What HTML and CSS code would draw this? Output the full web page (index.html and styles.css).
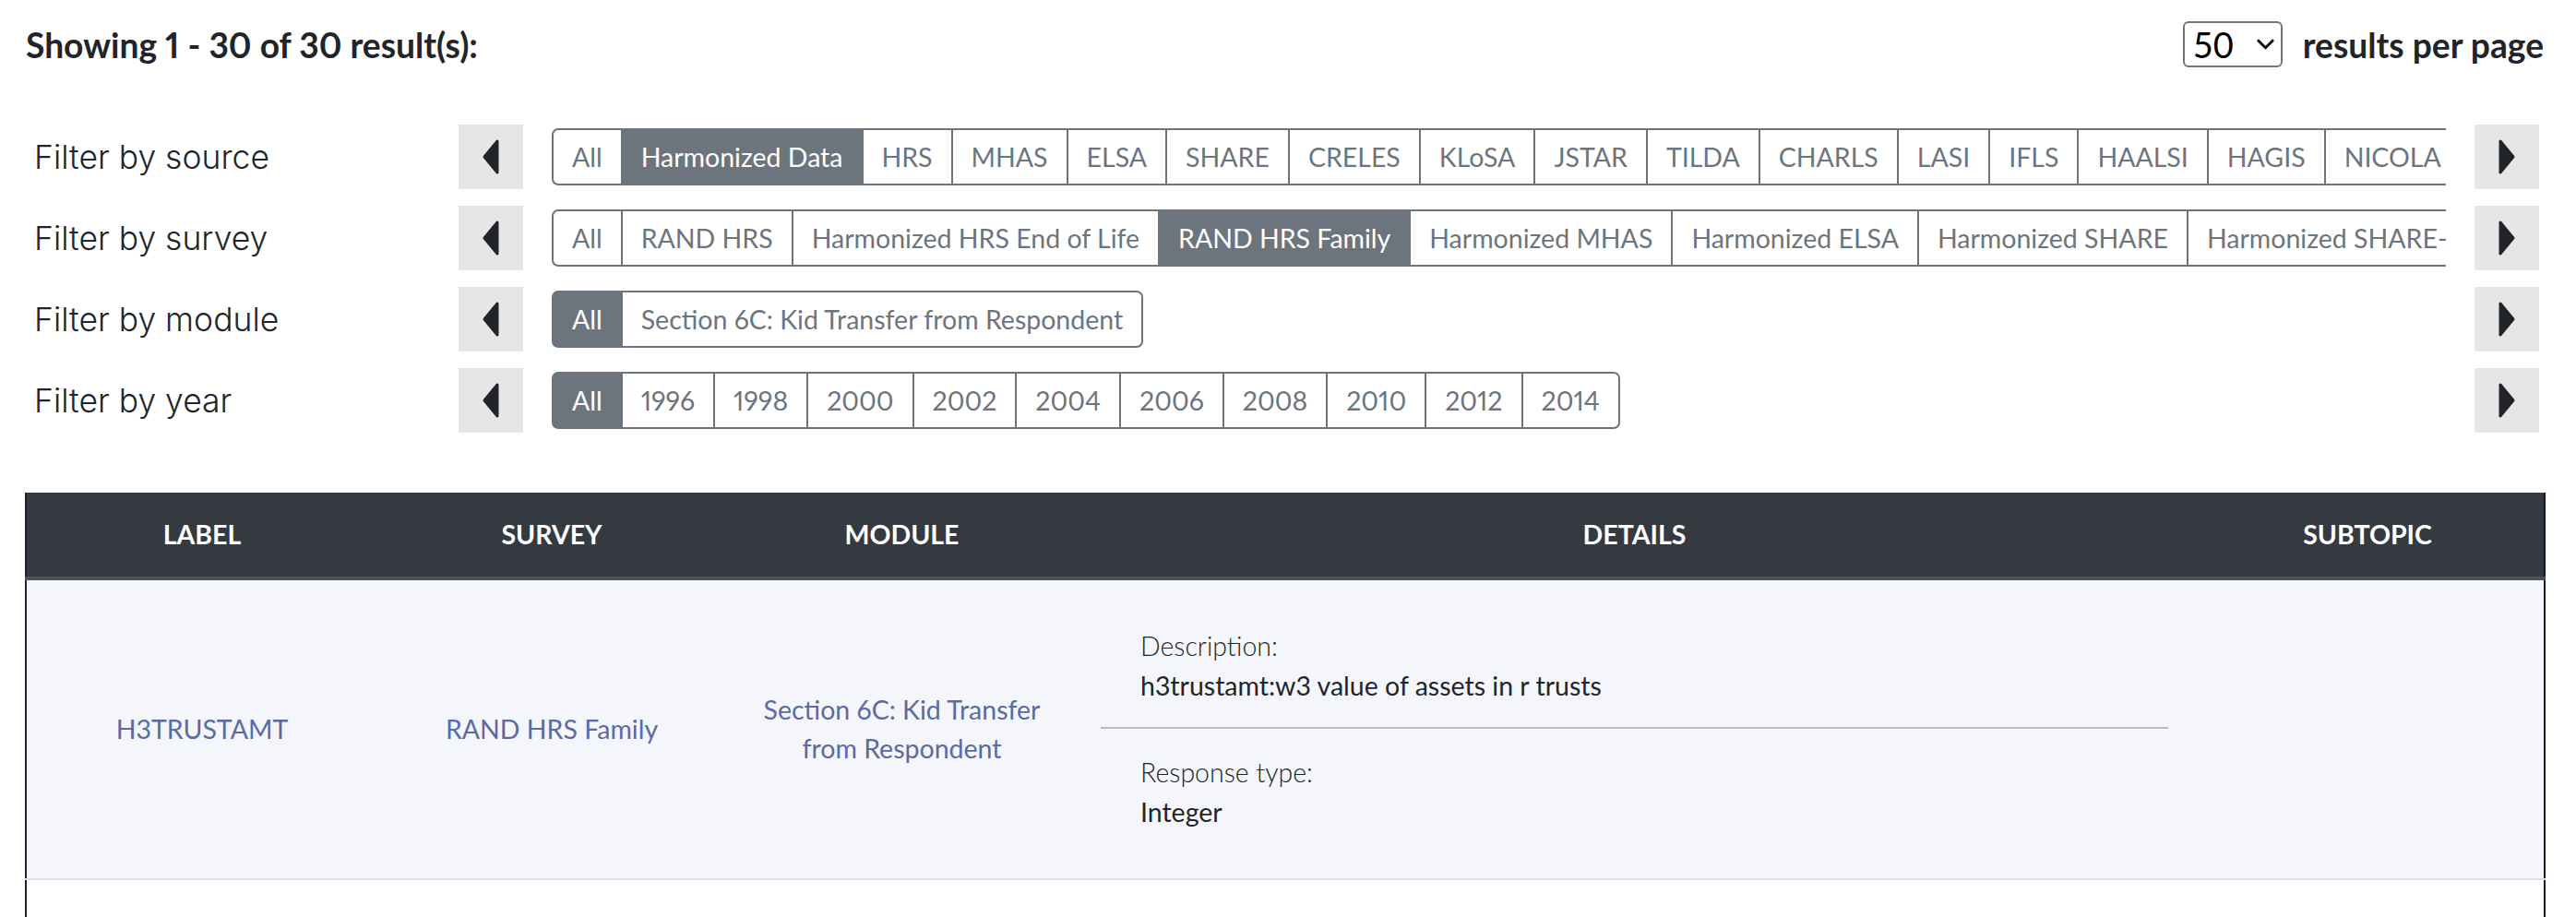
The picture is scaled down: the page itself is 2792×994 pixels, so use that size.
FILE: index.html
```html
<!DOCTYPE HTML>
<html>
<head>
    <title>Search results</title>
    <link rel="stylesheet" href="styles.css">
</head>
<body>
    <div class="results-bar">
        <h5 class="results-count">Showing 1 - 30 of 30 result(s):</h5>
        <div class="per-page">
            <div class="select-wrap">
                <select>
                    <option>10</option>
                    <option>25</option>
                    <option selected>50</option>
                    <option>100</option>
                </select>
                <svg class="select-caret" viewBox="0 0 20 12"><path d="M2 2l8 8 8-8" fill="none" stroke="#111" stroke-width="3.2" stroke-linecap="round" stroke-linejoin="round"/></svg>
            </div>
            <span>results per page</span>
        </div>
    </div>

    <div class="filters">
        <div class="filter-row">
            <div class="filter-label">Filter by source</div>
            <button class="scroll-btn"><svg viewBox="0 0 24 44"><path d="M19 5L5 22l14 17z"/></svg></button>
            <div class="filter-scroller">
                <div class="btn-group">
                    <button>All</button>
                    <button class="active">Harmonized Data</button>
                    <button>HRS</button>
                    <button>MHAS</button>
                    <button>ELSA</button>
                    <button>SHARE</button>
                    <button>CRELES</button>
                    <button>KLoSA</button>
                    <button>JSTAR</button>
                    <button>TILDA</button>
                    <button>CHARLS</button>
                    <button>LASI</button>
                    <button>IFLS</button>
                    <button>HAALSI</button>
                    <button>HAGIS</button>
                    <button>NICOLA</button>
                    <button>MARS</button>
                </div>
            </div>
            <button class="scroll-btn"><svg viewBox="0 0 24 44"><path d="M5 5l14 17L5 39z"/></svg></button>
        </div>
        <div class="filter-row">
            <div class="filter-label">Filter by survey</div>
            <button class="scroll-btn"><svg viewBox="0 0 24 44"><path d="M19 5L5 22l14 17z"/></svg></button>
            <div class="filter-scroller">
                <div class="btn-group">
                    <button>All</button>
                    <button>RAND HRS</button>
                    <button>Harmonized HRS End of Life</button>
                    <button class="active">RAND HRS Family</button>
                    <button>Harmonized MHAS</button>
                    <button>Harmonized ELSA</button>
                    <button>Harmonized SHARE</button>
                    <button>Harmonized SHARE-Israel</button>
                </div>
            </div>
            <button class="scroll-btn"><svg viewBox="0 0 24 44"><path d="M5 5l14 17L5 39z"/></svg></button>
        </div>
        <div class="filter-row">
            <div class="filter-label">Filter by module</div>
            <button class="scroll-btn"><svg viewBox="0 0 24 44"><path d="M19 5L5 22l14 17z"/></svg></button>
            <div class="filter-scroller">
                <div class="btn-group">
                    <button class="active">All</button>
                    <button>Section 6C: Kid Transfer from Respondent</button>
                </div>
            </div>
            <button class="scroll-btn"><svg viewBox="0 0 24 44"><path d="M5 5l14 17L5 39z"/></svg></button>
        </div>
        <div class="filter-row">
            <div class="filter-label">Filter by year</div>
            <button class="scroll-btn"><svg viewBox="0 0 24 44"><path d="M19 5L5 22l14 17z"/></svg></button>
            <div class="filter-scroller">
                <div class="btn-group">
                    <button class="active">All</button>
                    <button>1996</button>
                    <button>1998</button>
                    <button>2000</button>
                    <button>2002</button>
                    <button>2004</button>
                    <button>2006</button>
                    <button>2008</button>
                    <button>2010</button>
                    <button>2012</button>
                    <button>2014</button>
                </div>
            </div>
            <button class="scroll-btn"><svg viewBox="0 0 24 44"><path d="M5 5l14 17L5 39z"/></svg></button>
        </div>
    </div>

    <table class="results">
        <thead>
            <tr>
                <th class="col-label">Label</th>
                <th class="col-survey">Survey</th>
                <th class="col-module">Module</th>
                <th class="col-details">Details</th>
                <th class="col-subtopic">Subtopic</th>
            </tr>
        </thead>
        <tbody>
            <tr class="striped">
                <td><a href="#">H3TRUSTAMT</a></td>
                <td><a href="#">RAND HRS Family</a></td>
                <td><a href="#">Section 6C: Kid Transfer from Respondent</a></td>
                <td class="details">
                    <div class="detail-item">
                        <div class="detail-name">Description:</div>
                        <div class="detail-value">h3trustamt:w3 value of assets in r trusts</div>
                    </div>
                    <hr>
                    <div class="detail-item">
                        <div class="detail-name">Response type:</div>
                        <div class="detail-value">Integer</div>
                    </div>
                </td>
                <td></td>
            </tr>
            <tr>
                <td><a href="#">H4TRUSTAMT</a></td>
                <td><a href="#">RAND HRS Family</a></td>
                <td><a href="#">Section 6C: Kid Transfer from Respondent</a></td>
                <td class="details">
                    <div class="detail-item">
                        <div class="detail-name">Description:</div>
                        <div class="detail-value">h4trustamt:w4 value of assets in r trusts</div>
                    </div>
                    <hr>
                    <div class="detail-item">
                        <div class="detail-name">Response type:</div>
                        <div class="detail-value">Integer</div>
                    </div>
                </td>
                <td></td>
            </tr>
        </tbody>
    </table>
</body>
</html>
```

FILE: styles.css
```css
html, body{
    margin: 0px;
    overflow: hidden;
}
body{
    font-family: Lato, "Liberation Sans", sans-serif;
    font-variant-numeric: proportional-nums;
    color: #212529;
    background-color: #fff;
}

/* top bar */
.results-bar{
    display: flex;
    justify-content: space-between;
    align-items: center;
    height: 50px;
    padding: 23px 35px 0 28px;
}
.results-count{
    margin: 0;
    font-size: 37.2px;
    font-weight: 700;
}
.per-page{
    display: flex;
    align-items: center;
    gap: 22px;
    font-size: 37.2px;
    font-weight: 700;
}
.select-wrap{
    position: relative;
    width: 108px;
    height: 50px;
}
.select-wrap select{
    appearance: none;
    -webkit-appearance: none;
    width: 108px;
    height: 50px;
    margin: 0;
    padding: 0 0 0 9px;
    border: 2px solid #767676;
    border-radius: 6px;
    background: #fff;
    font-family: Lato, "Liberation Sans", sans-serif;
    font-size: 38px;
    color: #000;
}
.select-caret{
    position: absolute;
    right: 9px;
    top: 19px;
    width: 19px;
    height: 12px;
    pointer-events: none;
}

/* filter rows */
.filters{
    display: flex;
    flex-direction: column;
    gap: 18px;
    margin-top: 62px;
    padding: 0 40px 0 37px;
}
.filter-row{
    display: grid;
    grid-template-columns: 429px 70px 1fr 70px;
    column-gap: 31px;
    align-items: center;
    height: 70px;
}
.filter-label{
    font-family: Inter, "Noto Sans", sans-serif;
    font-size: 35.5px;
    font-weight: 300;
    color: #212529;
}
.scroll-btn{
    display: flex;
    align-items: center;
    justify-content: center;
    width: 70px;
    height: 70px;
    padding: 0;
    border: none;
    background-color: #e6e6e6;
}
.scroll-btn svg{
    width: 24px;
    height: 44px;
}
.scroll-btn path{
    fill: #212529;
    stroke: #212529;
    stroke-width: 3;
    stroke-linejoin: round;
}
.filter-scroller{
    overflow: hidden;
    white-space: nowrap;
}
.btn-group{
    display: inline-flex;
}
.btn-group button{
    margin: 0 0 0 -2px;
    padding: 8px 20px;
    border: 2px solid #6c757d;
    border-radius: 0;
    background: #fff;
    color: #6c757d;
    font-family: Lato, "Liberation Sans", sans-serif;
    font-variant-numeric: proportional-nums;
    font-size: 28.5px;
    line-height: 1.5;
    white-space: nowrap;
}
.btn-group button:first-child{
    margin-left: 0;
    border-radius: 7px 0 0 7px;
}
.btn-group button:last-child{
    border-radius: 0 7px 7px 0;
}
.btn-group button.active{
    background-color: #6c757d;
    color: #fff;
}

/* results table */
table.results{
    width: 2732px;
    margin: 65px 0 0 27px;
    border-collapse: collapse;
    table-layout: fixed;
    border-left: 2px solid #1c2330;
    border-right: 2px solid #111827;
    font-size: 28.5px;
    line-height: 1.5;
}
.results th{
    box-sizing: border-box;
    padding: 24px 25px;
    background-color: #343a40;
    border-bottom: 4px solid #4b5259;
    color: #fff;
    font-weight: 700;
    text-transform: uppercase;
    text-align: center;
}
.col-label, .col-module{
    width: 381px;
}
.col-survey{
    width: 378px;
}
.col-details{
    width: 1207px;
}
.results td{
    padding: 25px;
    border-bottom: 2px solid #dee2e6;
    text-align: center;
    vertical-align: middle;
}
.results tr.striped td{
    background-color: #f4f6fb;
}
.results a{
    color: #5a6aa4;
    text-decoration: none;
}
td.details{
    padding: 50px 25px;
    text-align: left;
}
.detail-item{
    padding: 0 43px;
}
.detail-name{
    font-weight: 300;
}
.details hr{
    margin: 24px 0 26px 0;
    border: none;
    border-top: 2px solid #bcbcc0;
}
```
